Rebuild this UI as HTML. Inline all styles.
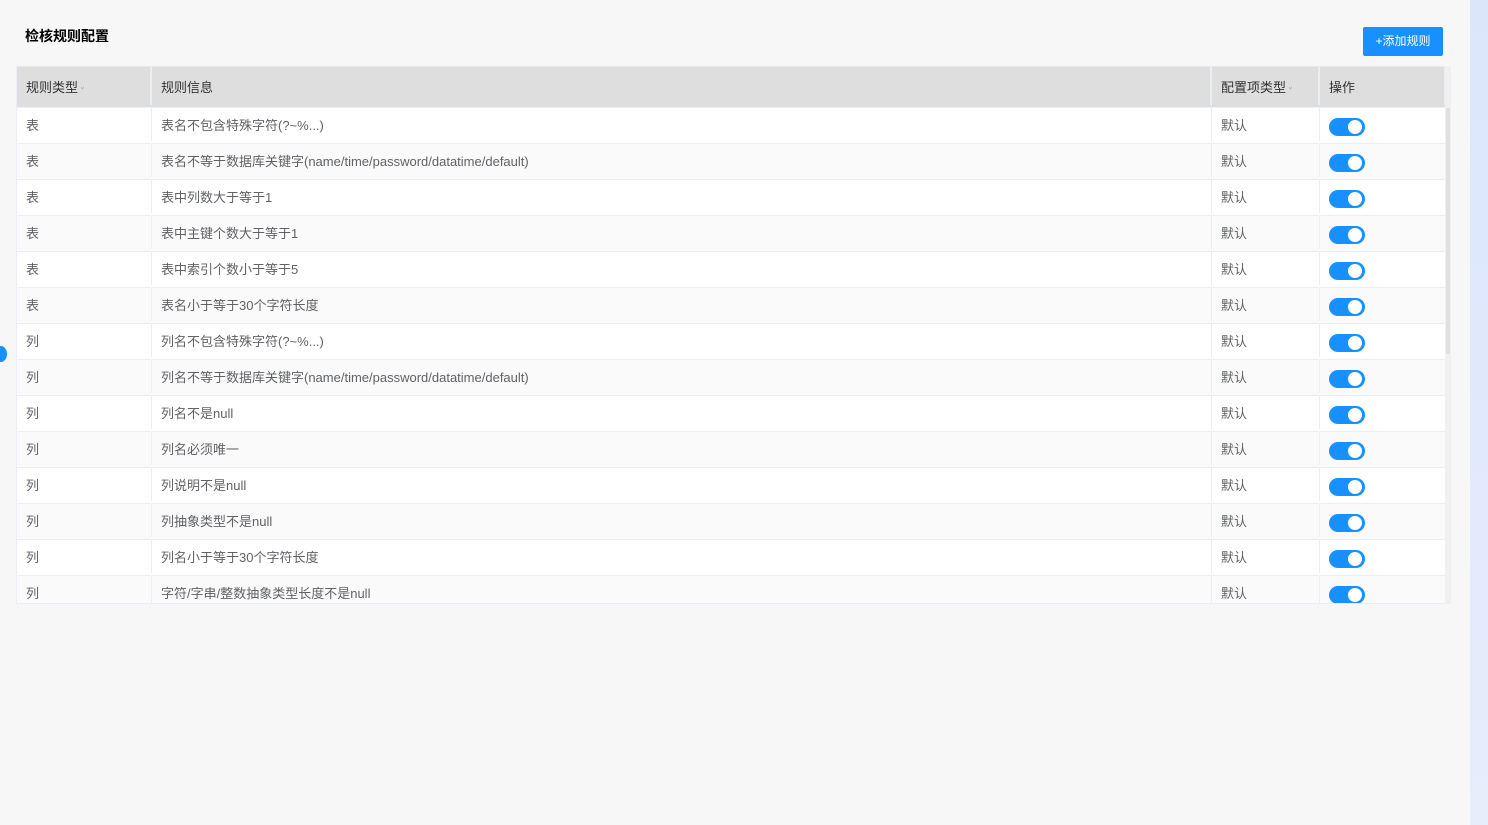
<!DOCTYPE html>
<html><head><meta charset="utf-8"><style>
*{box-sizing:border-box;margin:0;padding:0}
body{width:1488px;height:825px;background:#f7f7f7;font-family:"Liberation Sans","Noto Sans CJK SC",sans-serif;position:relative;overflow:hidden;color:#606266}
.strip{position:absolute;left:1470px;top:0;width:18px;height:825px;background:linear-gradient(#dbe6fd,#e6edfb)}
h1{position:absolute;left:25px;top:26px;font-size:14px;font-weight:bold;color:#000}
.btn{position:absolute;left:1363px;top:27px;width:80px;height:29px;background:#1890ff;color:#fff;font-size:12px;text-align:center;line-height:29px;border-radius:2px}
.tbl{position:absolute;left:16px;top:66px;width:1435px;height:538px;overflow:hidden;border-left:1px solid #ebeef5;border-bottom:1px solid #ebeef5}
.row{display:flex;height:36px;border-bottom:1px solid #ebeef5;background:#fff;font-size:13px;align-items:center;padding-bottom:2px}
.row:nth-child(odd){background:#fafafa}
.row.hd{height:42px;background:#dedede;color:#333;border-bottom:1px solid #ebeef5;border-top:1px solid #e8e8e8}
.c{height:100%;display:flex;align-items:center;padding-left:9px;border-right:1px solid #ebeef5}
.hd .c{border-right:2px solid #ebeef5}
.c1{width:135px}.c2{width:1060px}.c3{width:108px}.c4{width:126px}
.sw{width:36px;height:18px;border-radius:9px;background:#1890ff;position:relative;margin-left:0;margin-top:4px}
.sw:after{content:"";position:absolute;right:3px;top:2px;width:14px;height:14px;border-radius:50%;background:#fff}
.ar{font-size:8px;color:#aaa;margin-left:1px}
.sb{position:absolute;left:1445px;top:66px;width:6px;height:538px;background:#f0f0f0}
.sbt{position:absolute;left:1446px;top:108px;width:4px;height:246px;background:#e0e0e0}
.dot{position:absolute;left:-5px;top:346px;width:12px;height:16px;border-radius:50%;background:#1890ff}
</style></head><body>
<div class="strip"></div>
<div class="dot"></div>
<h1>检核规则配置</h1>
<div class="btn">+添加规则</div>
<div class="tbl">
<div class="row hd"><div class="c c1">规则类型<span class="ar">⌄</span></div><div class="c c2">规则信息</div><div class="c c3">配置项类型<span class="ar">⌄</span></div><div class="c c4">操作</div></div>
<div class="row"><div class="c c1">表</div><div class="c c2">表名不包含特殊字符(?~%...)</div><div class="c c3">默认</div><div class="c c4"><div class="sw"></div></div></div>
<div class="row"><div class="c c1">表</div><div class="c c2">表名不等于数据库关键字(name/time/password/datatime/default)</div><div class="c c3">默认</div><div class="c c4"><div class="sw"></div></div></div>
<div class="row"><div class="c c1">表</div><div class="c c2">表中列数大于等于1</div><div class="c c3">默认</div><div class="c c4"><div class="sw"></div></div></div>
<div class="row"><div class="c c1">表</div><div class="c c2">表中主键个数大于等于1</div><div class="c c3">默认</div><div class="c c4"><div class="sw"></div></div></div>
<div class="row"><div class="c c1">表</div><div class="c c2">表中索引个数小于等于5</div><div class="c c3">默认</div><div class="c c4"><div class="sw"></div></div></div>
<div class="row"><div class="c c1">表</div><div class="c c2">表名小于等于30个字符长度</div><div class="c c3">默认</div><div class="c c4"><div class="sw"></div></div></div>
<div class="row"><div class="c c1">列</div><div class="c c2">列名不包含特殊字符(?~%...)</div><div class="c c3">默认</div><div class="c c4"><div class="sw"></div></div></div>
<div class="row"><div class="c c1">列</div><div class="c c2">列名不等于数据库关键字(name/time/password/datatime/default)</div><div class="c c3">默认</div><div class="c c4"><div class="sw"></div></div></div>
<div class="row"><div class="c c1">列</div><div class="c c2">列名不是null</div><div class="c c3">默认</div><div class="c c4"><div class="sw"></div></div></div>
<div class="row"><div class="c c1">列</div><div class="c c2">列名必须唯一</div><div class="c c3">默认</div><div class="c c4"><div class="sw"></div></div></div>
<div class="row"><div class="c c1">列</div><div class="c c2">列说明不是null</div><div class="c c3">默认</div><div class="c c4"><div class="sw"></div></div></div>
<div class="row"><div class="c c1">列</div><div class="c c2">列抽象类型不是null</div><div class="c c3">默认</div><div class="c c4"><div class="sw"></div></div></div>
<div class="row"><div class="c c1">列</div><div class="c c2">列名小于等于30个字符长度</div><div class="c c3">默认</div><div class="c c4"><div class="sw"></div></div></div>
<div class="row"><div class="c c1">列</div><div class="c c2">字符/字串/整数抽象类型长度不是null</div><div class="c c3">默认</div><div class="c c4"><div class="sw"></div></div></div>
</div>
<div class="sb"></div><div class="sbt"></div>
</body></html>
